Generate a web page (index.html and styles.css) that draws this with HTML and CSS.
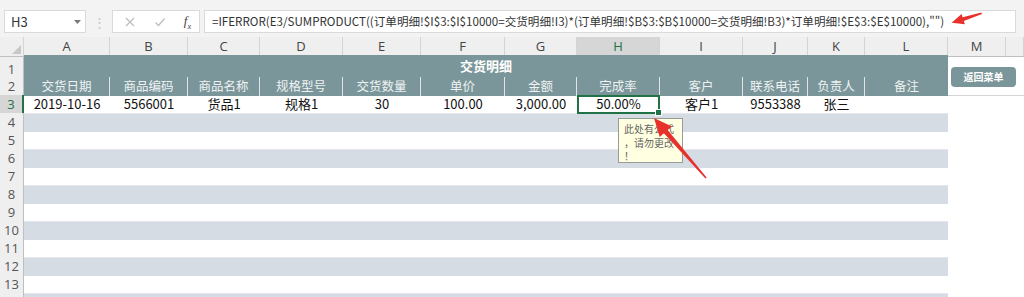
FILE: index.html
```html
<!DOCTYPE html>
<html lang="zh-CN">
<head>
  <meta charset="UTF-8" />
  <title>交货明细</title>
  <link rel="stylesheet" href="styles.css">
</head>
<body>
  <div class="app">

    <!-- FORMULA BAR -->
    <div class="toolbar">
      <div class="namebox">
        <span>H3</span>
        <svg class="caret" width="7" height="4" viewBox="0 0 7 4"><path d="M0 0h7L3.5 4z" fill="#7a7a7a"/></svg>
      </div>
      <div class="dots">⋮</div>
      <div class="fxbox">
        <svg width="12" height="12" viewBox="0 0 12 12"><path d="M2 2l8 8M10 2l-8 8" stroke="#bdbdbd" stroke-width="1.2"/></svg>
        <svg width="12" height="12" viewBox="0 0 12 12"><path d="M1.5 6.5l3 3 6-7" stroke="#bdbdbd" stroke-width="1.2" fill="none"/></svg>
        <span class="fx">f<sub>x</sub></span>
      </div>
      <div class="formula">=IFERROR(E3/SUMPRODUCT((订单明细!$I$3:$I$10000=交货明细!I3)*(订单明细!$B$3:$B$10000=交货明细!B3)*订单明细!$E$3:$E$10000),"")</div>
    </div>

    <!-- SHEET -->
    <div class="sheet">
      <div class="row colhead">
        <div class="corner"></div>
        <div>A</div><div>B</div><div>C</div><div>D</div><div>E</div><div>F</div>
        <div>G</div><div class="active">H</div><div>I</div><div>J</div><div>K</div><div>L</div>
        <div>M</div><div></div>
      </div>

      <div class="row r1">
        <div class="rh">1</div>
        <div class="title">交货明细</div>
        <div class="blank"></div><div class="blank"></div>
      </div>

      <div class="row r2">
        <div class="rh">2</div>
        <div class="th">交货日期</div><div class="th">商品编码</div><div class="th">商品名称</div>
        <div class="th">规格型号</div><div class="th">交货数量</div><div class="th">单价</div>
        <div class="th">金额</div><div class="th">完成率</div><div class="th">客户</div>
        <div class="th">联系电话</div><div class="th">负责人</div><div class="th last">备注</div>
        <div class="blank line"></div><div class="blank line"></div>
      </div>

      <div class="row r3">
        <div class="rh sel">3</div>
        <div class="td">2019-10-16</div><div class="td">5566001</div><div class="td">货品1</div>
        <div class="td">规格1</div><div class="td">30</div><div class="td">100.00</div>
        <div class="td">3,000.00</div><div class="td cur">50.00%<span class="handle"></span></div>
        <div class="td">客户1</div><div class="td">9553388</div><div class="td">张三</div><div class="td"></div>
        <div class="blank"></div><div class="blank"></div>
      </div>

      <div class="row band"><div class="rh">4</div><div class="fill"></div><div class="blank"></div><div class="blank"></div></div>
      <div class="row"><div class="rh">5</div><div class="fill"></div><div class="blank"></div><div class="blank"></div></div>
      <div class="row band"><div class="rh">6</div><div class="fill"></div><div class="blank"></div><div class="blank"></div></div>
      <div class="row"><div class="rh">7</div><div class="fill"></div><div class="blank"></div><div class="blank"></div></div>
      <div class="row band"><div class="rh">8</div><div class="fill"></div><div class="blank"></div><div class="blank"></div></div>
      <div class="row"><div class="rh">9</div><div class="fill"></div><div class="blank"></div><div class="blank"></div></div>
      <div class="row band"><div class="rh">10</div><div class="fill"></div><div class="blank"></div><div class="blank"></div></div>
      <div class="row"><div class="rh">11</div><div class="fill"></div><div class="blank"></div><div class="blank"></div></div>
      <div class="row band"><div class="rh">12</div><div class="fill"></div><div class="blank"></div><div class="blank"></div></div>
      <div class="row"><div class="rh">13</div><div class="fill"></div><div class="blank"></div><div class="blank"></div></div>
      <div class="row band"><div class="rh"></div><div class="fill"></div><div class="blank"></div><div class="blank"></div></div>
    </div>

    <!-- FLOATING SHAPES -->
    <div class="menu-btn">返回菜单</div>

    <div class="comment">此处有公式<br>，请勿更改<br>！</div>

    <svg class="arrows" width="1024" height="297" viewBox="0 0 1024 297">
      <polygon fill="#e8312b" points="654,118 671.9,126.4 667.7,130.1 706.6,177.5 705.4,178.5 663.9,133.3 659.7,137"/>
      <polygon fill="#e8312b" points="951.7,22.7 964.9,24.2 963.8,21 982,14 981.4,12.6 962.6,17.3 961.5,14"/>
    </svg>
  </div>
</body>
</html>
```

FILE: styles.css
```css
body {
  margin: 0;
  background: #fff;
  font-family: "Noto Sans CJK SC", "Noto Sans", sans-serif;
  overflow: hidden;
}
.app {
  position: relative;
  width: 1024px;
  height: 297px;
  overflow: hidden;
}

/* formula bar */
.toolbar {
  height: 37px;
  background: #f3f3f3;
  display: flex;
  align-items: flex-start;
  padding-top: 10px;
  box-sizing: border-box;
}
.namebox {
  margin-left: 4px;
  width: 82px;
  height: 23px;
  background: #fff;
  border: 1px solid #dadada;
  box-sizing: border-box;
  display: flex;
  align-items: center;
  justify-content: space-between;
  padding: 0 4px 0 6px;
  font-size: 13px;
  color: #333;
}
.dots {
  width: 26px;
  text-align: center;
  color: #c4c4c4;
  font-size: 13px;
  line-height: 23px;
}
.fxbox {
  width: 88px;
  height: 23px;
  background: #fff;
  border: 1px solid #dadada;
  box-sizing: border-box;
  display: flex;
  align-items: center;
  justify-content: space-between;
  padding: 0 8px 0 11px;
}
.fx {
  font-family: "Liberation Serif", serif;
  font-style: italic;
  font-size: 13px;
  color: #444;
}
.fx sub {
  font-size: 8px;
}
.formula {
  margin-left: 4px;
  width: 812px;
  height: 23px;
  background: #fff;
  border: 1px solid #dadada;
  box-sizing: border-box;
  padding-left: 7px;
  font-size: 11.6px;
  line-height: 21px;
  color: #333;
  white-space: nowrap;
  overflow: hidden;
}

/* grid */
.row {
  display: grid;
  grid-template-columns: 24px 86px 78px 72px 83px 78px 84px 72px 83px 83px 65px 57px 83px 58px 1fr;
  height: 18px;
  font-size: 13px;
}
.row > div {
  box-sizing: border-box;
}
.rh {
  background: #efefef;
  border-right: 1px solid #bfbfbf;
  border-bottom: 1px solid #d8d8d8;
  color: #555;
  text-align: center;
  font-family: "Open Sans", sans-serif;
  font-size: 13px;
  line-height: 18px;
}
.rh.sel {
  background: #d6d6d6;
  border-right: 2px solid #217346;
  color: #217346;
}
.colhead > div {
  background: #efefef;
  border-right: 1px solid #d4d4d4;
  border-bottom: 1px solid #bfbfbf;
  color: #444;
  text-align: center;
  font-family: "Open Sans", sans-serif;
  font-size: 13px;
  line-height: 18px;
}
.colhead > .active {
  background: #d6d6d6;
  border-bottom: 2px solid #217346;
  color: #217346;
}
.colhead > .corner {
  position: relative;
}
.corner::after {
  content: "";
  position: absolute;
  right: 2px;
  bottom: 2px;
  border-left: 9px solid transparent;
  border-bottom: 9px solid #c8c8c8;
}

.r1 {
  height: 22px;
}
.r1 .rh {
  line-height: 28px;
}
.title {
  grid-column: 2 / span 12;
  background: #7b969a;
  border-bottom: 1px solid #a9bbbe;
  color: #fff;
  font-weight: bold;
  text-align: center;
  line-height: 22px;
}
.th {
  background: #7b969a;
  border-right: 1px solid #dfe6e7;
  color: #eef2f3;
  text-align: center;
  line-height: 18px;
  font-size: 12.5px;
}
.th.last {
  border-right: none;
}
.blank.line {
  border-bottom: 1px solid #d4d4d4;
}
.td {
  color: #111;
  text-align: center;
  line-height: 18px;
}
.td.cur {
  position: relative;
  border: 2px solid #217346;
  line-height: 14px;
}
.handle {
  position: absolute;
  right: -4px;
  bottom: -4px;
  width: 5px;
  height: 5px;
  background: #217346;
  border: 1px solid #fff;
}
.fill {
  grid-column: 2 / span 12;
}
.band .fill {
  background: #d6dce4;
  border-top: 1px solid #e4e8ee;
}

/* floating shapes */
.menu-btn {
  position: absolute;
  left: 951px;
  top: 67px;
  width: 65px;
  height: 20px;
  border-radius: 4px;
  background: #7b969a;
  color: #fff;
  font-size: 10px;
  font-weight: bold;
  text-align: center;
  line-height: 19px;
}
.comment {
  position: absolute;
  left: 618px;
  top: 118px;
  width: 65px;
  height: 45px;
  box-sizing: border-box;
  background: #ffffe1;
  border: 1px solid #9a9a9a;
  padding: 3px 0 0 5px;
  font-size: 10px;
  line-height: 13.5px;
  color: #666;
  white-space: nowrap;
  overflow: hidden;
}
.arrows {
  position: absolute;
  left: 0;
  top: 0;
}
```
